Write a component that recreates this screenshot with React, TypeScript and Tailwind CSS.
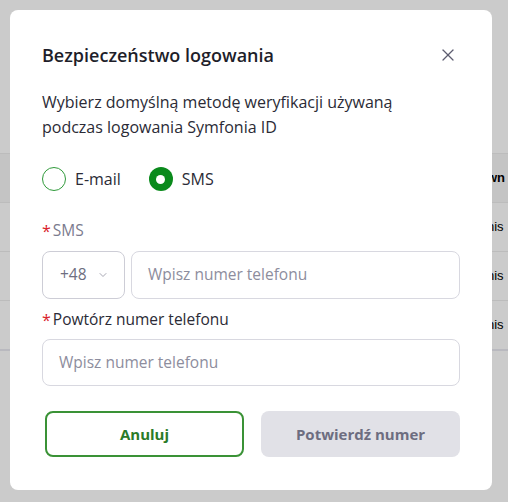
import { X, ChevronDown } from 'lucide-react'

const rows = ['nistrator', 'nistrator', 'nistrator']

function BackgroundTable() {
  return (
    <div className="pt-[153px] font-['Liberation_Sans',sans-serif] text-[13px] text-black">
      <div className="h-[49px] border-t border-[#bcbcbc] bg-[#c4c4c4] flex items-center">
        <span className="ml-[487px] whitespace-nowrap font-bold">wn</span>
      </div>
      {rows.map((r, i) => (
        <div key={i} className="h-[49px] border-t border-[#bcbcbc] flex items-center">
          <span className="ml-[487px] whitespace-nowrap">nis</span>
        </div>
      ))}
      <div className="h-[2px] bg-[#b9b9bf]" />
    </div>
  )
}

function Radio({ checked, label }: { checked?: boolean; label: string }) {
  return (
    <label className="flex items-center gap-[9px]">
      {checked ? (
        <span className="w-6 h-6 rounded-full bg-[#0a8a1c] flex items-center justify-center">
          <span className="w-[9px] h-[9px] rounded-full bg-white" />
        </span>
      ) : (
        <span className="w-6 h-6 rounded-full border border-[#2f9a3a]" />
      )}
      <span className="text-[16px] text-[#2b2b36]">{label}</span>
    </label>
  )
}

export default function App() {
  return (
    <div className="relative h-[502px] w-[508px] overflow-hidden bg-[#cbcbcb] font-['Open_Sans',sans-serif]">
      <BackgroundTable />

      <div className="absolute left-[10px] top-[10px] w-[482px] h-[480px] rounded-lg bg-white px-8 pt-[30px]">
        <div className="flex items-center justify-between h-[30px]">
          <h2 className="text-[18px] font-semibold text-[#1e1e2a]">Bezpieczeństwo logowania</h2>
          <X size={20} strokeWidth={1.5} className="text-[#5d5d70] mr-[2px]" />
        </div>

        <p className="mt-[20px] text-[16px] leading-[25px] text-[#2b2b36]">
          Wybierz domyślną metodę weryfikacji używaną
          <br />
          podczas logowania Symfonia ID
        </p>

        <div className="mt-[27px] flex items-center gap-[28px]">
          <Radio label="E-mail" />
          <Radio checked label="SMS" />
        </div>

        <div className="mt-[30px] h-5 flex items-center text-[15.5px] text-[#7b7b8e]">
          <span className="text-[#d9222a] mr-[2px] text-[16px] leading-none">*</span>SMS
        </div>
        <div className="mt-[10px] flex gap-[6px] w-[418px]">
          <div className="w-[83px] h-12 shrink-0 rounded-lg border border-[#cdcdd6] flex items-center pl-[17px] gap-[10px] text-[15.5px] text-[#6e6e80]">
            +48
            <ChevronDown size={12} strokeWidth={1.5} className="text-[#8a8a9a]" />
          </div>
          <div className="flex-1 h-12 rounded-lg border border-[#d8d8e0] flex items-center pl-4 text-[15.5px] text-[#8d8d9d]">
            Wpisz numer telefonu
          </div>
        </div>

        <div className="mt-[11px] h-5 flex items-center text-[15.5px] text-[#2b2b36]">
          <span className="text-[#d9222a] mr-[2px] text-[16px] leading-none">*</span>Powtórz numer telefonu
        </div>
        <div className="mt-[9px] w-[418px] h-[47px] rounded-lg border border-[#d8d8e0] flex items-center pl-4 text-[15.5px] text-[#8d8d9d]">
          Wpisz numer telefonu
        </div>

        <div className="mt-[25px] flex gap-[17px] pl-[3px] w-[418px]">
          <button className="w-[199px] h-[46px] rounded-lg border-2 border-[#3a9236] text-[15px] font-bold text-[#2a7a28]">
            Anuluj
          </button>
          <button className="w-[199px] h-[46px] rounded-lg bg-[#e1e1e7] text-[15px] font-bold text-[#6d6d80]">
            Potwierdź numer
          </button>
        </div>
      </div>
    </div>
  )
}
